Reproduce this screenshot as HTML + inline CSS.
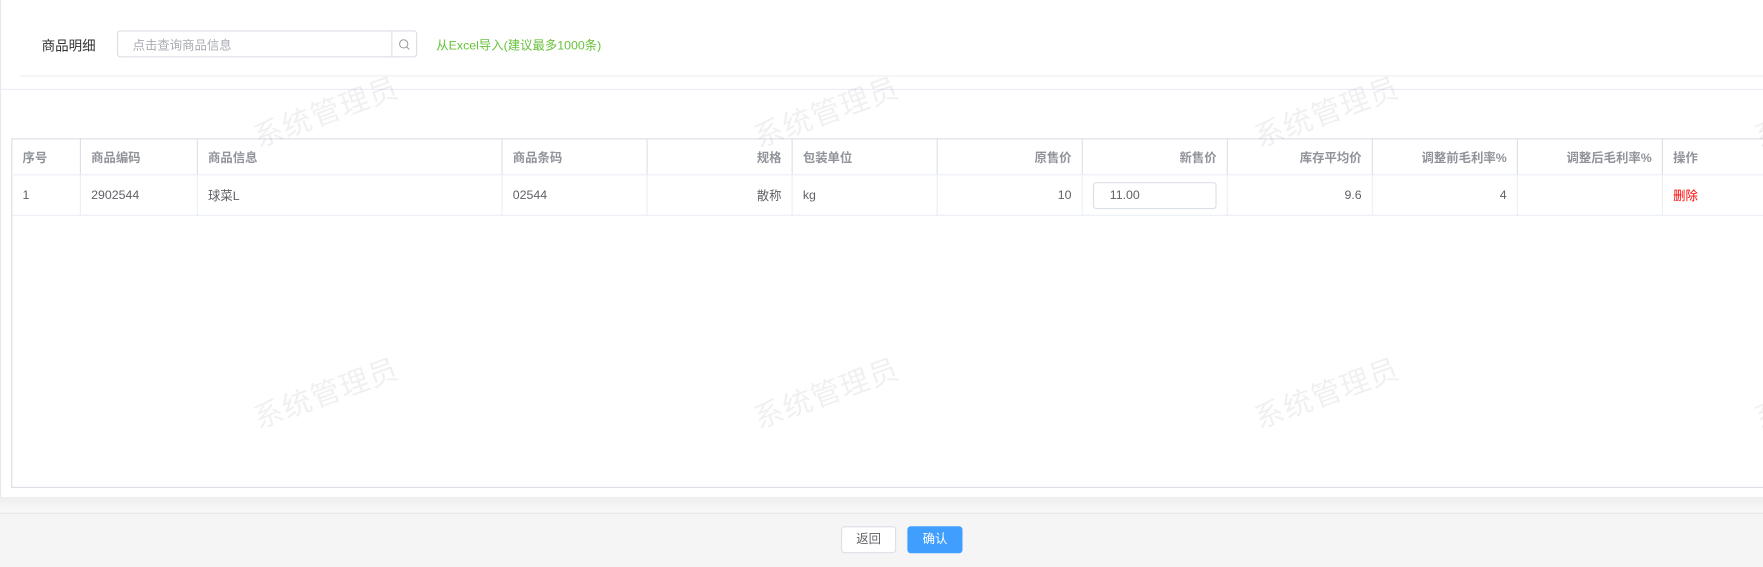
<!DOCTYPE html>
<html><head><meta charset="utf-8"><style>
*{box-sizing:border-box;margin:0;padding:0}
html,body{width:1763px;height:567px;overflow:hidden;background:#fff}
#w{width:1568px;height:505px;position:relative;transform:scale(1.1244);transform-origin:0 0;font-family:"Liberation Sans","Noto Sans CJK SC",sans-serif;font-size:11px;color:#606266;overflow:hidden}
.abs{position:absolute}
.wm{position:absolute;font-size:26px;color:rgba(0,0,0,0.06);transform:rotate(-20deg);white-space:nowrap;letter-spacing:1px}
table{border-collapse:collapse;table-layout:fixed;position:absolute;left:10px;top:123px;width:1560px}
td,th{border-right:1px solid #ebeef5;border-bottom:1px solid #ebeef5;padding:0 9px;text-align:left;font-weight:normal;white-space:nowrap}
th{height:32px;color:#909399;font-weight:bold;border-top:1px solid #dcdfe6;border-right:1px solid #dcdfe6}
td{height:36px;color:#606266}
.r{text-align:right}
</style></head><body><div id="w">
<div class="abs" style="left:0;top:0;width:1px;height:442px;background:#e8e8e8"></div>
<div class="abs" style="left:37px;top:32px;font-size:12px;color:#303133">商品明细</div>
<div class="abs" style="left:104px;top:27px;width:267px;height:24px;border:1px solid #dcdfe6;border-radius:3px"></div>
<div class="abs" style="left:118px;top:32px;color:#a8abb2">点击查询商品信息</div>
<div class="abs" style="left:348px;top:27px;width:23px;height:24px;border-left:1px solid #dcdfe6"></div>
<svg class="abs" style="left:354px;top:34px" width="11" height="11" viewBox="0 0 12 12"><circle cx="5.5" cy="5.5" r="4" fill="none" stroke="#999" stroke-width="1"/><path d="M8.5 8.5L11 11" stroke="#999"/></svg>
<div class="abs" style="left:388px;top:32px;color:#67c23a">从Excel导入(建议最多1000条)</div>
<div class="abs" style="left:18px;top:67px;width:1550px;height:1px;background:#ebeef5"></div>
<div class="abs" style="left:0;top:79px;width:1568px;height:1px;background:#ebeef5"></div>
<table>
<colgroup><col style="width:61px"><col style="width:104px"><col style="width:271px"><col style="width:129px"><col style="width:129px"><col style="width:129px"><col style="width:129px"><col style="width:129px"><col style="width:129px"><col style="width:129px"><col style="width:129px"><col></colgroup>
<tr><th style="border-left:1px solid #dcdfe6">序号</th><th>商品编码</th><th>商品信息</th><th>商品条码</th><th class="r">规格</th><th>包装单位</th><th class="r">原售价</th><th class="r">新售价</th><th class="r">库存平均价</th><th class="r">调整前毛利率%</th><th class="r">调整后毛利率%</th><th>操作</th></tr>
<tr><td style="border-left:1px solid #dcdfe6">1</td><td>2902544</td><td>球菜L</td><td>02544</td><td class="r">散称</td><td>kg</td><td class="r">10</td><td><div style="width:110px;height:24px;border:1px solid #dcdfe6;border-radius:3px;padding:5px 14px">11.00</div></td><td class="r">9.6</td><td class="r">4</td><td></td><td style="color:#f00">删除</td></tr>
</table>
<div class="abs" style="left:10px;top:191px;width:1px;height:243px;background:#dcdfe6"></div>
<div class="abs" style="left:10px;top:433px;width:1558px;height:1px;background:#dcdfe6"></div>
<div class="abs" style="left:0;top:442px;width:1568px;height:14px;background:linear-gradient(#eee,#f9f9f9)"></div>
<div class="abs" style="left:0;top:456px;width:1568px;height:60px;background:#f5f5f5;border-top:1px solid #e8e8e8"></div>
<div class="abs" style="left:748px;top:468px;width:49px;height:24px;border:1px solid #dcdfe6;border-radius:3px;background:#fff;text-align:center;line-height:22px;color:#606266">返回</div>
<div class="abs" style="left:807px;top:468px;width:49px;height:24px;border-radius:3px;background:#409eff;text-align:center;line-height:24px;color:#fff">确认</div>
<div class="wm" style="left:222px;top:80px">系统管理员</div>
<div class="wm" style="left:667px;top:80px">系统管理员</div>
<div class="wm" style="left:1112px;top:80px">系统管理员</div>
<div class="wm" style="left:1557px;top:80px">系统管理员</div>
<div class="wm" style="left:222px;top:330px">系统管理员</div>
<div class="wm" style="left:667px;top:330px">系统管理员</div>
<div class="wm" style="left:1112px;top:330px">系统管理员</div>
<div class="wm" style="left:1557px;top:330px">系统管理员</div>
</div></body></html>
